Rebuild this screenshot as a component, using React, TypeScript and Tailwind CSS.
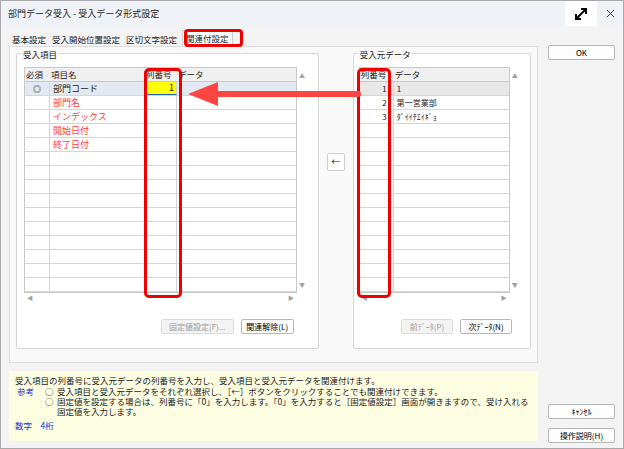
import React from 'react'

const F = { fontFamily: '"Noto Sans CJK JP", "Noto Sans", sans-serif' }

const leftRows = [
  { req: '◎', name: '部門コード', red: false, col: '1', sel: true },
  { req: '', name: '部門名', red: true },
  { req: '', name: 'インデックス', red: true },
  { req: '', name: '開始日付', red: true },
  { req: '', name: '終了日付', red: true },
]
const rightRows = [
  { no: '1', data: '1' },
  { no: '2', data: '第一営業部' },
  { no: '3', data: 'ﾀﾞｲｲﾁｴｲｷﾞｮ' },
]

const Btn = ({ children, w, disabled }: { children: React.ReactNode; w: string; disabled?: boolean }) => (
  <div className={`${w} h-[15px] flex items-center justify-center rounded-[2px] border text-[8px] ${disabled ? 'border-[#dcdcdc] text-[#9a9a9a] bg-[#f3f3f3]' : 'border-[#b8b8b8] text-black bg-[#fdfdfd]'}`}>
    {children}
  </div>
)

const VScroll = () => (
  <div className="w-[10px] flex flex-col justify-between items-center py-[4px] text-[6px] text-[#a0a0a0]">
    <span>▲</span><span>▼</span>
  </div>
)

export default function App() {
  return (
    <div style={F} className="w-[624px] h-[449px] bg-[#f3f3f3] border border-[#a9a9a9] relative overflow-hidden text-[9px] text-[#222]">
      {/* title bar */}
      <div className="h-[25px] bg-[#eff3f8] flex items-center justify-between pl-[7px]">
        <span className="text-[9px]">部門データ受入 - 受入データ形式設定</span>
        <div className="flex items-center h-full">
          <div className="w-[32px] h-full bg-white flex items-center justify-center">
            <svg width="16" height="16" viewBox="0 0 16 16" fill="none" stroke="black" strokeWidth="2">
              <path d="M3 13L13 3M8 3h5v5M3 8v5h5" />
            </svg>
          </div>
          <div className="w-[26px] flex items-center justify-center">
            <svg width="9" height="9" viewBox="0 0 9 9" stroke="#333" strokeWidth="1"><path d="M1 1L8 8M8 1L1 8" /></svg>
          </div>
        </div>
      </div>

      <div className="flex px-[8px] pt-[5px] gap-[10px]">
        <div className="w-[529px] flex flex-col">
          {/* tabs */}
          <div className="flex h-[15px] items-end text-[8.5px]">
            <span className="px-[3px]">基本設定</span>
            <span className="px-[3px]">受入開始位置設定</span>
            <span className="px-[3px]">区切文字設定</span>
            <span className="px-[3px] ml-[2px] bg-white border border-[#ccc] border-b-0 h-[16px] flex items-center">関連付設定</span>
          </div>
          {/* main panel */}
          <div className="h-[317px] bg-[#f9f9f9] border border-[#dcdcdc] flex px-[6px] pt-[6px] gap-[8px]">
            {/* left group */}
            <div className="w-[304px] h-[296px] border border-[#d6d6d6] rounded-[2px] bg-white relative px-[7px] pt-[13px]">
              <span className="absolute -top-[6px] left-[5px] bg-[#f9f9f9] px-[1px] text-[8.5px]">受入項目</span>
              <div className="flex">
                <div className="w-[273px] border border-[#c8c8c8]">
                  <div className="flex h-[14px] bg-[#f0f0f0] border-b border-[#c8c8c8] items-center text-[8.5px]">
                    <span className="w-[25px] pl-[1px]">必須</span>
                    <span className="w-[95px] pl-[1px]">項目名</span>
                    <span className="w-[32px] pl-[1px]">列番号</span>
                    <span className="flex-1 pl-[1px]">データ</span>
                  </div>
                  {Array.from({ length: 15 }).map((_, i) => {
                    const r = leftRows[i]
                    return (
                      <div key={i} className={`flex h-[14px] border-b border-[#d6d6d6] items-center ${r?.sel ? 'bg-[#e3e9f1]' : ''}`}>
                        <span className="w-[25px] h-full border-r border-[#d6d6d6] flex items-center justify-center text-[8px]">{r?.req}</span>
                        <span className={`w-[95px] h-full border-r border-[#d6d6d6] pl-[3px] flex items-center ${r?.red ? 'text-[#ff3b3b]' : ''}`}>{r?.name}</span>
                        <span className={`w-[32px] h-full border-r border-[#d6d6d6] flex items-center justify-end pr-[2px] ${r?.col ? 'bg-[#ffff00] border-b border-b-[#2060c0]' : ''}`}>{r?.col}</span>
                        <span className="flex-1" />
                      </div>
                    )
                  })}
                </div>
                <VScroll />
              </div>
              <div className="w-[273px] h-[9px] flex justify-between items-center px-[3px] text-[6px] text-[#a0a0a0]"><span>◀</span><span>▶</span></div>
              <div className="flex justify-end gap-[7px] mt-[17px] pr-[17px]">
                <Btn w="w-[73px]" disabled>固定値設定(F)...</Btn>
                <Btn w="w-[53px]">関連解除(L)</Btn>
              </div>
            </div>

            {/* arrow button */}
            <div className="w-[18px] flex pt-[100px]">
              <div className="w-[18px] h-[18px] bg-white border border-[#cfcfcf] rounded-[2px] flex items-center justify-center text-[9px]">←</div>
            </div>

            {/* right group */}
            <div className="w-[179px] h-[296px] border border-[#d6d6d6] rounded-[2px] bg-white relative px-[5px] pt-[13px]">
              <span className="absolute -top-[6px] left-[5px] bg-[#f9f9f9] px-[1px] text-[8.5px]">受入元データ</span>
              <div className="flex">
                <div className="w-[151px] border border-[#c8c8c8]">
                  <div className="flex h-[14px] bg-[#f0f0f0] border-b border-[#c8c8c8] items-center text-[8.5px]">
                    <span className="w-[34px] pl-[1px]">列番号</span>
                    <span className="flex-1 pl-[1px]">データ</span>
                  </div>
                  {Array.from({ length: 15 }).map((_, i) => {
                    const r = rightRows[i]
                    return (
                      <div key={i} className={`flex h-[14px] border-b border-[#d6d6d6] items-center ${i === 0 ? 'bg-[#e8e8e8]' : ''}`}>
                        <span className="w-[34px] h-full border-r border-[#d6d6d6] flex items-center justify-end pr-[6px] text-[8px]">{r?.no}</span>
                        <span className="flex-1 pl-[3px] text-[8px]">{r?.data}</span>
                      </div>
                    )
                  })}
                </div>
                <VScroll />
              </div>
              <div className="w-[151px] h-[9px] flex justify-between items-center px-[3px] text-[6px] text-[#a0a0a0]"><span>◀</span><span>▶</span></div>
              <div className="flex justify-end gap-[7px] mt-[17px] pr-[13px]">
                <Btn w="w-[52px]" disabled>前ﾃﾞｰﾀ(P)</Btn>
                <Btn w="w-[52px]">次ﾃﾞｰﾀ(N)</Btn>
              </div>
            </div>
          </div>
          {/* info */}
          <div className="mt-[8px] h-[70px] bg-[#fdfde2] px-[6px] pt-[4px] text-[8.5px] leading-[10px]">
            <div>受入項目の列番号に受入元データの列番号を入力し、受入項目と受入元データを関連付けます。</div>
            <div className="flex mt-[1px]">
              <span className="w-[30px] pl-[2px] text-[#2233cc]">参考</span>
              <div className="flex-1">
                <div className="flex"><span className="w-[12px]">○</span><span>受入項目と受入元データをそれぞれ選択し、［←］ボタンをクリックすることでも関連付けできます。</span></div>
                <div className="flex"><span className="w-[12px] shrink-0">○</span><span>固定値を設定する場合は、列番号に「0」を入力します。「0」を入力すると［固定値設定］画面が開きますので、受け入れる固定値を入力します。</span></div>
              </div>
            </div>
            <div className="text-[#2233cc] mt-[4px]">数字　4桁</div>
          </div>
        </div>

        {/* right buttons */}
        <div className="w-[67px] flex flex-col pt-[14px]">
          <Btn w="w-[67px]">OK</Btn>
          <div className="mt-[344px] flex flex-col gap-[9px]">
            <Btn w="w-[67px]">ｷｬﾝｾﾙ</Btn>
            <Btn w="w-[67px]">操作説明(H)</Btn>
          </div>
        </div>
      </div>

      {/* annotations */}
      <div className="absolute left-[183px] top-[28px] w-[59px] h-[18px] border-[3px] border-[#ee0000] rounded-[4px]" />
      <div className="absolute left-[143px] top-[67px] w-[38px] h-[230px] border-[3px] border-[#ee0000] rounded-[5px]" />
      <div className="absolute left-[356px] top-[67px] w-[34px] h-[230px] border-[3px] border-[#ee0000] rounded-[5px]" />
      <svg className="absolute left-[185px] top-[80px]" width="175" height="26" viewBox="0 0 175 26">
        <path d="M30 10H172a3 3 0 0 1 0 6H30z" fill="#ff4444" />
        <path d="M2 13L32 1V25z" fill="#ff4444" />
      </svg>
    </div>
  )
}
